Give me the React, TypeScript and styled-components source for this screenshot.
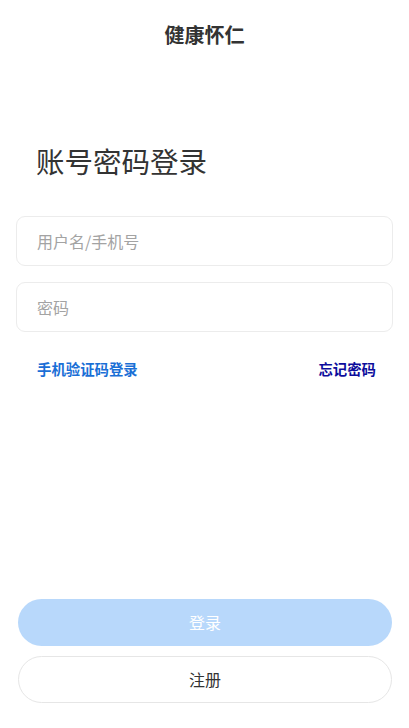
import React from "react";
import styled, { createGlobalStyle } from "styled-components";

const GlobalStyle = createGlobalStyle`
  html, body { margin: 0; padding: 0; background: #ffffff; }
  body { font-family: "Noto Sans CJK SC", "Noto Sans", sans-serif; }
  * { box-sizing: border-box; }
`;

const Page = styled.div`
  min-height: 100vh;
  display: flex;
  flex-direction: column;
  background: #fff;
`;

const Header = styled.header`
  height: 70px;
  display: flex;
  align-items: center;
  justify-content: center;
`;

const Title = styled.h1`
  margin: 0;
  font-size: 20px;
  font-weight: 700;
  color: #333;
  line-height: 26px;
`;

const Heading = styled.h2`
  margin: 71px 0 0;
  padding-left: 36px;
  font-size: 28.5px;
  font-weight: 400;
  line-height: 40px;
  color: #333;
`;

const Form = styled.form`
  margin-top: 35px;
  padding: 0 16px 0 16px;
  display: flex;
  flex-direction: column;
  gap: 16px;
`;

const Field = styled.input`
  height: 50px;
  width: 100%;
  border: 1px solid #ececec;
  border-radius: 9px;
  padding: 0 20px;
  font-family: inherit;
  font-size: 16px;
  color: #333;
  background: #fff;
  outline: none;
  &::placeholder { color: #a3a3a3; }
`;

const Links = styled.div`
  margin-top: 27px;
  padding: 0 33px 0 37px;
  display: flex;
  justify-content: space-between;
  align-items: center;
  height: 20px;
`;

const LinkText = styled.a<{ $tone: string }>`
  font-size: 14.4px;
  font-weight: 700;
  line-height: 20px;
  color: ${(p) => p.$tone};
  text-decoration: none;
`;

const Spacer = styled.div`
  flex: 1;
`;

const Actions = styled.div`
  padding: 0 17px 25px 18px;
  display: flex;
  flex-direction: column;
  gap: 10px;
`;

const Button = styled.button<{ $primary?: boolean }>`
  height: 47px;
  width: 100%;
  border-radius: 24px;
  font-family: inherit;
  font-size: 16px;
  line-height: 20px;
  padding: 0 0 2px;
  border: ${(p) => (p.$primary ? "none" : "1px solid #e6e6e6")};
  background: ${(p) => (p.$primary ? "#b8d8fb" : "#ffffff")};
  color: ${(p) => (p.$primary ? "#ffffff" : "#333333")};
`;

export default function App() {
  return (
    <>
      <GlobalStyle />
      <Page>
        <Header>
          <Title>健康怀仁</Title>
        </Header>
        <Heading>账号密码登录</Heading>
        <Form onSubmit={(e) => e.preventDefault()}>
          <Field placeholder="用户名/手机号" />
          <Field type="password" placeholder="密码" />
        </Form>
        <Links>
          <LinkText $tone="#1a6fd6">手机验证码登录</LinkText>
          <LinkText $tone="#0c0c9c">忘记密码</LinkText>
        </Links>
        <Spacer />
        <Actions>
          <Button $primary>登录</Button>
          <Button>注册</Button>
        </Actions>
      </Page>
    </>
  );
}
